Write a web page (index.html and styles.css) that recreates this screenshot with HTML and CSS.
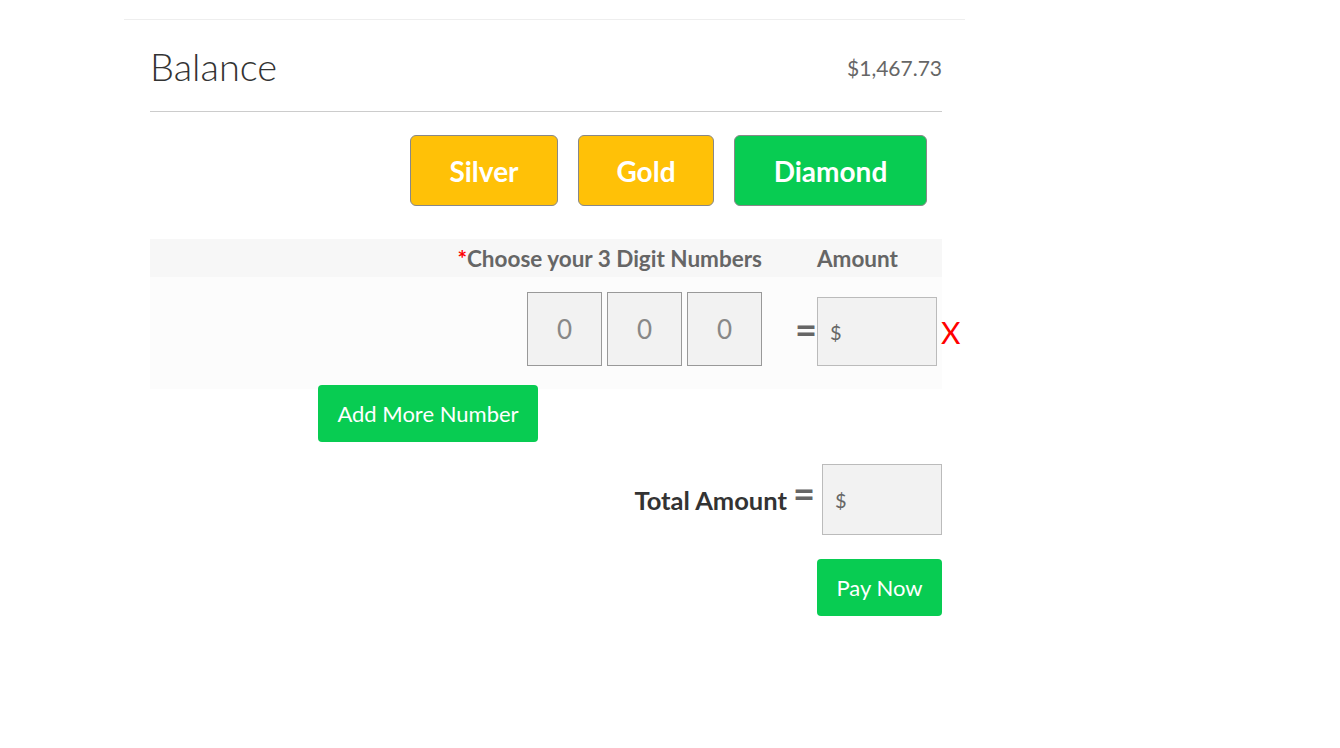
FILE: index.html
```html
<!DOCTYPE html>
<html lang="en">
<head>
    <meta charset="UTF-8">
    <meta name="viewport" content="width=device-width, initial-scale=1.0">
    <title>Balance</title>
    <link rel="stylesheet" href="styles.css">
</head>
<body>
    <div class="panel">
        <div class="balance">
            <h2 class="balance-title">Balance</h2>
            <span class="balance-amount">$1,467.73</span>
        </div>

        <div class="tiers">
            <button class="tier tier-gold">Silver</button>
            <button class="tier tier-gold">Gold</button>
            <button class="tier tier-green">Diamond</button>
        </div>

        <div class="picks">
            <div class="picks-head">
                <div class="col-numbers"><span class="req">*</span>Choose your 3 Digit Numbers</div>
                <div class="col-eq"></div>
                <div class="col-amount">Amount</div>
                <div class="col-end"></div>
            </div>
            <div class="picks-row">
                <div class="col-numbers digits">
                    <input type="text" class="digit" placeholder="0" maxlength="1">
                    <input type="text" class="digit" placeholder="0" maxlength="1">
                    <input type="text" class="digit" placeholder="0" maxlength="1">
                </div>
                <div class="col-eq eq">=</div>
                <div class="col-amount"><input type="text" class="money" placeholder="$"></div>
                <div class="col-end"><span class="remove">X</span></div>
            </div>
        </div>

        <button class="btn add-more">Add More Number</button>

        <div class="total">
            <span class="total-label">Total Amount</span>
            <span class="eq total-eq">=</span>
            <input type="text" class="money money-total" placeholder="$">
        </div>

        <div class="pay">
            <button class="btn">Pay Now</button>
        </div>
    </div>
</body>
</html>
```

FILE: styles.css
```css
body { margin: 0; background: #fff; font-family: "Lato", "Liberation Sans", sans-serif; color: #333; }
.panel { width: 792px; margin: 19px 0 0 124px; padding: 0 23px 0 26px; border-top: 1px solid #eee; }

.balance { display: flex; justify-content: space-between; align-items: center; height: 91px; border-bottom: 1px solid #ccc; }
.balance-title { margin: 0; font-size: 38px; font-weight: 300; color: #333; }
.balance-amount { margin-top: 4px; font-size: 21px; color: #666; }

.tiers { display: flex; justify-content: flex-end; gap: 20px; margin-top: 23px; padding-right: 15px; }
.tier { height: 71px; padding: 0; border: 1px solid #888; border-radius: 6px; color: #fff; font-family: inherit; font-size: 28px; font-weight: bold; }
.tier-gold { background: #ffc107; }
.tier-gold:first-child { width: 148px; }
.tier-gold:nth-child(2) { width: 136px; }
.tier-green { width: 193px; background: #08cc52; }

.picks { margin-top: 33px; }
.picks-head { display: flex; height: 38px; align-items: center; background: #f7f7f7; font-size: 22.5px; font-weight: bold; color: #666; }
.picks-row { display: flex; align-items: flex-end; padding: 15px 0 23px; background: #fcfcfc; }
.col-numbers { flex: 1; text-align: right; }
.col-eq { flex: 0 0 55px; }
.col-amount { flex: 0 0 120px; }
.col-end { flex: 0 0 5px; min-width: 0; }
.req { color: #f00; }

.digits { display: flex; justify-content: flex-end; gap: 5px; }
.digit { width: 75px; height: 74px; box-sizing: border-box; border: 1px solid #999; background: #f2f2f2; text-align: center; font-family: inherit; font-size: 26px; color: #555; }
.digit::placeholder { color: #888; }
.eq { font-size: 38px; font-weight: bold; color: #666; line-height: 1; }
.picks-row .eq { align-self: center; text-align: right; }
.money { display: block; width: 120px; height: 69px; box-sizing: border-box; padding: 0 0 0 12px; border: 1px solid #bbb; background: #f2f2f2; font-family: inherit; font-size: 20px; color: #555; }
.money::placeholder { color: #666; }
.col-end { align-self: center; }
.remove { display: block; padding-left: 4px; margin-top: 6px; color: #f00; font-size: 30px; line-height: 1; white-space: nowrap; }

.btn { height: 57px; padding: 0; border: none; border-radius: 4px; background: #08cc52; color: #fff; font-family: inherit; font-size: 22px; cursor: pointer; }
.add-more { display: block; position: relative; width: 220px; margin: -4px 0 0 168px; }

.total { display: flex; justify-content: flex-end; align-items: center; margin-top: 22px; }
.total-label { font-size: 25.5px; font-weight: bold; color: #333; }
.total-eq { margin: 0 7px 14px 6px; }
.money-total { height: 71px; }

.pay { display: flex; justify-content: flex-end; margin-top: 24px; }
.pay .btn { width: 125px; }
```
